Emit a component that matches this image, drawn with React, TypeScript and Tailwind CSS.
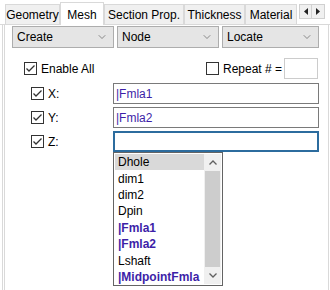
import { ChevronDown } from "lucide-react";

const TABS = ["Geometry", "Mesh", "Section Prop.", "Thickness", "Material"];
const TAB_WIDTHS = ["w-[55px]", "w-[44px]", "w-[80px]", "w-[61px]", "w-[52px]"];

const LIST_ITEMS = [
  { label: "Dhole", fmla: false },
  { label: "dim1", fmla: false },
  { label: "dim2", fmla: false },
  { label: "Dpin", fmla: false },
  { label: "|Fmla1", fmla: true },
  { label: "|Fmla2", fmla: true },
  { label: "Lshaft", fmla: false },
  { label: "|MidpointFmla", fmla: true },
];

function Check({ checked }: { checked: boolean }) {
  return (
    <div className="w-[13px] h-[13px] border border-[#333] bg-white flex items-center justify-center">
      {checked && (
        <svg width="11" height="11" viewBox="0 0 11 11">
          <path d="M1.5 5.5 L4 8 L9.5 2.5" stroke="#333" strokeWidth="1.3" fill="none" />
        </svg>
      )}
    </div>
  );
}

function Combo({ label, width }: { label: string; width: string }) {
  return (
    <div className={`${width} h-[22px] bg-[#e5e5e5] border border-[#adadad] flex items-center pl-[4px] pr-[5px]`}>
      <span className="flex-1">{label}</span>
      <ChevronDown size={12} strokeWidth={1.3} color="#555" />
    </div>
  );
}

function FieldRow({ name, value, focused }: { name: string; value: string; focused?: boolean }) {
  return (
    <div className="flex items-center h-[21px]">
      <div className="w-[19px]" />
      <Check checked />
      <span className="ml-[4px] w-[65px]">{name}</span>
      <div
        className={`w-[206px] h-[21px] bg-white flex items-center pl-[2px] text-[#3d1fa8] ${
          focused ? "border-2 border-[#2c6c9e]" : "border border-[#7a7a7a]"
        }`}
      >
        {value}
      </div>
    </div>
  );
}

function App() {
  return (
    <div
      className="relative w-[330px] h-[290px] bg-white overflow-hidden text-[12px] text-black"
      style={{ fontFamily: '"Liberation Sans", Arial, sans-serif' }}
    >
      {/* tab strip */}
      <div className="flex items-end h-[25px] pl-[5px] border-b border-[#d9d9d9]">
        {TABS.map((t, i) =>
          t === "Mesh" ? (
            <div
              key={t}
              className={`${TAB_WIDTHS[i]} h-[23px] bg-white border border-b-0 border-[#d9d9d9] -mb-px flex items-start justify-center pt-[3px]`}
            >
              {t}
            </div>
          ) : (
            <div
              key={t}
              className={`${TAB_WIDTHS[i]} h-[20px] bg-[#f0f0f0] border border-b-0 border-[#d9d9d9] flex items-center justify-center`}
            >
              {t}
            </div>
          )
        )}
        <div className="flex self-start mt-[4px] ml-[2px]">
          <div className="w-[13px] h-[15px] bg-[#f0f0f0] border border-[#d0d0d0] flex items-center justify-center">
            <svg width="4" height="7" viewBox="0 0 4 7">
              <path d="M4 0 L0 3.5 L4 7Z" fill="#222" />
            </svg>
          </div>
          <div className="w-[13px] h-[15px] bg-[#f0f0f0] border border-l-0 border-[#d0d0d0] flex items-center justify-center">
            <svg width="4" height="7" viewBox="0 0 4 7">
              <path d="M0 0 L4 3.5 L0 7Z" fill="#222" />
            </svg>
          </div>
        </div>
      </div>

      {/* page */}
      <div className="h-[265px] ml-[2px] w-[327px] border-l border-r border-[#d9d9d9]">
        <div className="h-full ml-[1px] border-l border-[#d9d9d9] pl-[7px] pt-[1px]">
          <div className="flex gap-[3px]">
            <Combo label="Create" width="w-[102px]" />
            <Combo label="Node" width="w-[102px]" />
            <Combo label="Locate" width="w-[97px]" />
          </div>

          <div className="flex items-center h-[21px] mt-[10px]">
            <div className="w-[12px]" />
            <Check checked />
            <span className="ml-[4px] w-[165px]">Enable All</span>
            <Check checked={false} />
            <span className="ml-[4px]">Repeat # =</span>
            <div className="ml-[2px] w-[34px] h-[21px] bg-white border border-[#cccccc]" />
          </div>

          <div className="flex flex-col gap-[3px] mt-[4px]">
            <FieldRow name="X:" value="|Fmla1" />
            <FieldRow name="Y:" value="|Fmla2" />
            <FieldRow name="Z:" value="" focused />
          </div>
        </div>
      </div>

      {/* dropdown list */}
      <div className="absolute left-[113px] top-[152px] w-[110px] h-[134px] bg-white border border-[#646464] flex p-[1px]">
        <div className="flex-1 flex flex-col">
          {LIST_ITEMS.map((it, i) => (
            <div
              key={it.label}
              className={`h-[16.4px] flex items-center pl-[3px] ${i === 0 ? "bg-[#d9d9d9]" : ""} ${
                it.fmla ? "font-bold text-[#3d1fa8]" : ""
              }`}
            >
              {it.label}
            </div>
          ))}
        </div>
        <div className="w-[17px] flex flex-col bg-[#f0f0f0]">
          <div className="h-[17px] flex items-center justify-center">
            <svg width="8" height="5" viewBox="0 0 8 5">
              <path d="M0.5 4.5 L4 1 L7.5 4.5" stroke="#606060" strokeWidth="1.3" fill="none" />
            </svg>
          </div>
          <div className="flex-1 mx-[1px] bg-[#cdcdcd]" />
          <div className="h-[17px] flex items-center justify-center">
            <svg width="8" height="5" viewBox="0 0 8 5">
              <path d="M0.5 0.5 L4 4 L7.5 0.5" stroke="#606060" strokeWidth="1.3" fill="none" />
            </svg>
          </div>
        </div>
      </div>
    </div>
  );
}

export default App;
